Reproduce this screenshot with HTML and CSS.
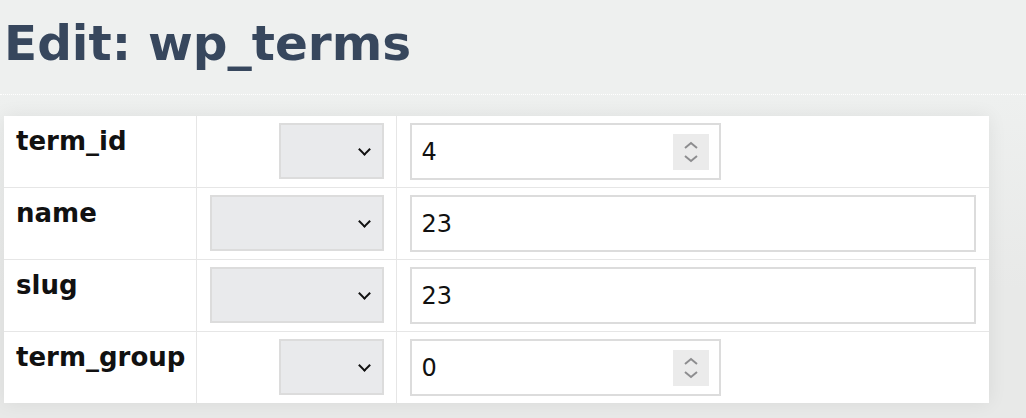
FILE: index.html
```html
<!DOCTYPE html>
<html>
<head>
<meta charset="utf-8">
<link rel="stylesheet" href="styles.css">
</head>
<body>
<h1 class="title">Edit: wp_terms</h1>
<div class="rule"></div>
<div class="panel">
  <table class="edit">
    <tr>
      <th class="label">term_id</th>
      <td class="func"><div class="select narrow"><span class="chev"></span></div></td>
      <td class="val"><div class="field num"><span class="text">4</span><span class="spin"><svg width="16" height="26" viewBox="0 0 16 26"><path d="M2 9 L8 4 L14 9 M2 17 L8 22 L14 17" fill="none" stroke="#8d8d8f" stroke-width="2"/></svg></span></div></td>
    </tr>
    <tr>
      <th class="label">name</th>
      <td class="func"><div class="select wide"><span class="chev"></span></div></td>
      <td class="val"><div class="field text-field"><span class="text">23</span></div></td>
    </tr>
    <tr>
      <th class="label">slug</th>
      <td class="func"><div class="select wide"><span class="chev"></span></div></td>
      <td class="val"><div class="field text-field"><span class="text">23</span></div></td>
    </tr>
    <tr>
      <th class="label">term_group</th>
      <td class="func"><div class="select narrow"><span class="chev"></span></div></td>
      <td class="val"><div class="field num"><span class="text">0</span><span class="spin"><svg width="16" height="26" viewBox="0 0 16 26"><path d="M2 9 L8 4 L14 9 M2 17 L8 22 L14 17" fill="none" stroke="#8d8d8f" stroke-width="2"/></svg></span></div></td>
    </tr>
  </table>
</div>
</body>
</html>
```

FILE: styles.css
```css
html, body {
  margin: 0;
  padding: 0;
  background: #eef0ef;
  width: 1026px;
  height: 418px;
  overflow: hidden;
}
.title {
  margin: 0;
  padding: 15px 0 0 4px;
  height: 80px;
  box-sizing: border-box;
  font-family: "DejaVu Sans", Verdana, sans-serif;
  font-weight: bold;
  font-size: 48.5px;
  line-height: 56px;
  color: #37475d;
}
.rule {
  margin-top: 14px;
  border-top: 1px dotted #ffffff;
}
.panel {
  background: linear-gradient(#eef0ef, #e8e9e8 60%);
  padding: 21px 0 0 4px;
  height: 323px;
  box-sizing: border-box;
}
.edit {
  border-collapse: collapse;
  background: #fff;
  width: 985px;
  box-shadow: 0 0 18px rgba(0,0,0,0.07);
}
.edit tr + tr th, .edit tr + tr td {
  border-top: 1px solid #e6e6e6;
}
.edit td, .edit th {
  padding: 7px 12px 7px 13px;
  vertical-align: top;
  height: 57px;
}
.label {
  width: 192px;
  box-sizing: border-box;
  text-align: left;
  font-family: "DejaVu Sans", Verdana, sans-serif;
  font-weight: bold;
  font-size: 26px;
  line-height: 30px;
  color: #111;
  padding: 10px 0 0 12px !important;
  border-right: 1px solid #e6e6e6;
}
.func {
  width: 200px;
  box-sizing: border-box;
  text-align: right;
  border-right: 1px solid #e6e6e6;
}
.select {
  display: inline-flex;
  align-items: center;
  justify-content: flex-end;
  height: 56px;
  box-sizing: border-box;
  background: #e9eaec;
  border: 2px solid #dcdcdc;
  padding-right: 11px;
  vertical-align: top;
}
.select.narrow { width: 105px; }
.select.wide { width: 174px; }
.chev {
  width: 7px;
  height: 7px;
  border-right: 2px solid #111;
  border-bottom: 2px solid #111;
  transform: rotate(45deg);
  margin-top: -4px;
  margin-right: 2px;
}
.field {
  display: flex;
  align-items: center;
  height: 57px;
  box-sizing: border-box;
  border: 2px solid #dcdcdc;
  background: #fff;
  padding: 0 10px 0 10px;
  font-family: "DejaVu Sans", Verdana, sans-serif;
  font-size: 24px;
  color: #111;
}
.field.num { width: 311px; }
.field.text-field { width: 566px; }
.text { flex: 1; }
.spin {
  width: 36px;
  height: 36px;
  background: #ebebeb;
  display: flex;
  align-items: center;
  justify-content: center;
}
```
